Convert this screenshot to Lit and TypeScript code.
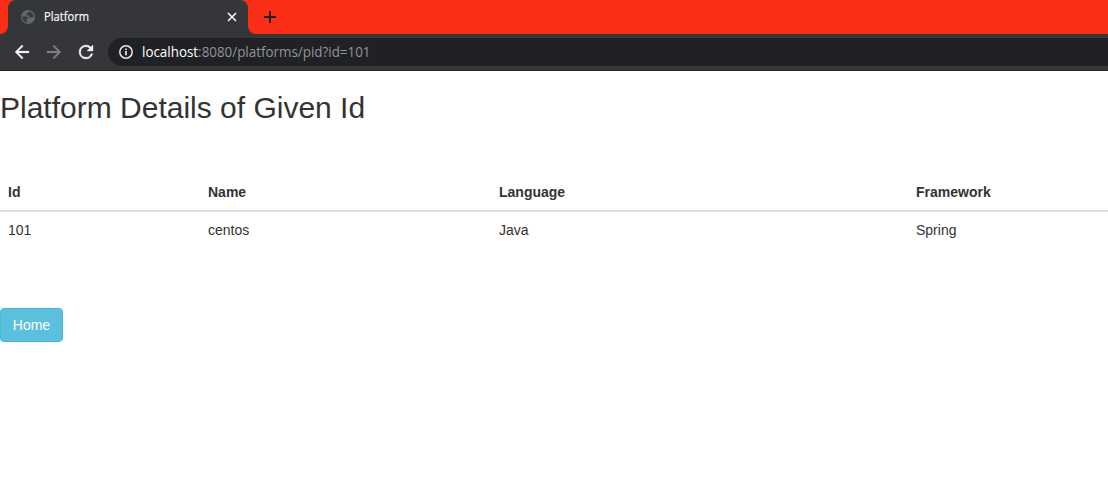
import { LitElement, html, css } from "lit";
import { customElement } from "lit/decorators.js";

@customElement("browser-chrome")
class BrowserChrome extends LitElement {
  static styles = css`
    :host { display: block; font-family: "Open Sans", "Noto Sans", sans-serif; }
    svg { display: block; flex: none; }
    .strip { display: flex; height: 34px; background: #fd2e17; }
    .curve { width: 8px; height: 34px; flex: none; }
    .tab { box-sizing: border-box; width: 240px; height: 34px; display: flex; align-items: center; padding: 0 10px 0 12px; background: #35363a; border-radius: 8px 8px 0 0; }
    .title { width: 45px; margin-left: 8px; flex: 1; }
    .plus { margin: 10px 0 0 7px; }
    .bar { box-sizing: border-box; height: 37px; display: flex; align-items: center; background: #35363a; border-bottom: 1px solid #2a2023; padding-left: 14px; }
    .fwd, .reload { margin-left: 16px; }
    .pill { height: 28px; flex: 1; margin-left: 14px; display: flex; align-items: center; background: #202124; border-radius: 14px 0 0 14px; padding-left: 10px; }
    .url { margin-left: 8px; }
  `;
  render() {
    return html`
      <div class="strip">
        <svg class="curve" viewBox="0 0 8 34"><path d="M8 26v8H0a8 8 0 0 0 8-8z" fill="#35363a"/></svg>
        <div class="tab">
          <svg width="16" height="16" viewBox="0 0 16 16"><circle cx="8" cy="8" r="7" fill="#64676c"/><path d="M2.2 7.5h3.3c2 0 2.9 1 2.9 2.6H6.2v1.2l1 .4v1.9C4.300 13.300 2 11 2.200 7.500zM9.700 2.400C7.700 2.800 8.100 4 6.600 4.600v1.800h2.200c.3 1.500.9 2.200 2.500 2.200.9 0 1.300-.5 2.500-.5 0-2.900-1.700-4.900-4.100-5.700z" fill="#3b3c40"/></svg>
          <svg class="title" height="34"><text x="0" y="21" fill="#fff" font-size="12" stroke="#fff" stroke-width=".15" textLength="45" lengthAdjust="spacingAndGlyphs">Platform</text></svg>
          <svg width="12" height="12" viewBox="0 0 12 12"><path d="m2 2 8 8M10 2 2 10" stroke="#f1f3f4" stroke-width="1.700"/></svg>
        </div>
        <svg class="curve" viewBox="0 0 8 34"><path d="M0 26v8h8a8 8 0 0 1-8-8z" fill="#35363a"/></svg>
        <svg class="plus" width="14" height="14" viewBox="0 0 14 14"><path d="M7 1v12M1 7h12" stroke="#202124" stroke-width="2"/></svg>
      </div>
      <div class="bar">
        <svg width="16" height="16" viewBox="2.860 2.860 18.280 18.280"><path d="M20 11H7.830l5.590-5.590L12 4l-8 8 8 8 1.410-1.410L7.830 13H20z" fill="#f1f3f4" stroke="#f1f3f4" stroke-width=".3"/></svg>
        <svg class="fwd" width="16" height="16" viewBox="2.860 2.860 18.280 18.280"><path d="M4 11h12.170l-5.590-5.590L12 4l8 8-8 8-1.410-1.410L16.170 13H4z" fill="#808184" stroke="#808184" stroke-width=".2"/></svg>
        <svg class="reload" width="16" height="16" viewBox="2.860 2.860 18.280 18.280"><path d="M17.650 6.350A7.960 7.960 0 0 0 12 4a8 8 0 1 0 7.730 10h-2.080A6 6 0 1 1 12 6c1.660 0 3.140.69 4.220 1.780L13 11h7V4z" fill="#f1f3f4" stroke="#f1f3f4" stroke-width=".4"/></svg>
        <div class="pill">
          <svg width="16" height="16" viewBox="0 0 16 16"><circle cx="8" cy="8" r="6.200" fill="none" stroke="#e8eaed" stroke-width="1.500"/><path d="M8 7v4.300M8 4.400V6" stroke="#e8eaed" stroke-width="1.700"/></svg>
          <svg class="url" width="240" height="28"><text x="0" y="19" fill="#929599" font-size="14" textLength="228.500" lengthAdjust="spacingAndGlyphs"><tspan fill="#fff">localhost</tspan>:8080/platforms/pid?id=101</text></svg>
        </div>
      </div>`;
  }
}

@customElement("app-root")
class AppRoot extends LitElement {
  static styles = css`
    :host { display: block; height: 498px; overflow: hidden; background: #fff; color: #333; font: 14px/20px "Liberation Sans", Arial, sans-serif; }
    h2 { font-size: 30px; line-height: 33px; margin: 20px 0 50px; font-weight: 400; }
    table { width: 1108px; border-collapse: separate; border-spacing: 0; table-layout: fixed; margin-bottom: 60px; }
    th, td { text-align: left; padding: 8px; }
    th { border-bottom: 2px solid #ddd; }
    .c1 { width: 200px; }
    .c2 { width: 291px; }
    .c3 { width: 417px; }
    .btn { display: block; box-sizing: border-box; width: 63px; height: 34px; padding: 6px 0; font: inherit; color: #fff; background: #5bc0de; border: 1px solid #46b8da; border-radius: 4px; text-align: center; }
  `;
  render() {
    return html`
      <browser-chrome></browser-chrome>
      <main>
        <h2>Platform Details of Given Id</h2>
        <table>
          <colgroup><col class="c1"><col class="c2"><col class="c3"><col></colgroup>
          <thead><tr><th>Id</th><th>Name</th><th>Language</th><th>Framework</th></tr></thead>
          <tbody><tr><td>101</td><td>centos</td><td>Java</td><td>Spring</td></tr></tbody>
        </table>
        <button class="btn">Home</button>
      </main>`;
  }
}
